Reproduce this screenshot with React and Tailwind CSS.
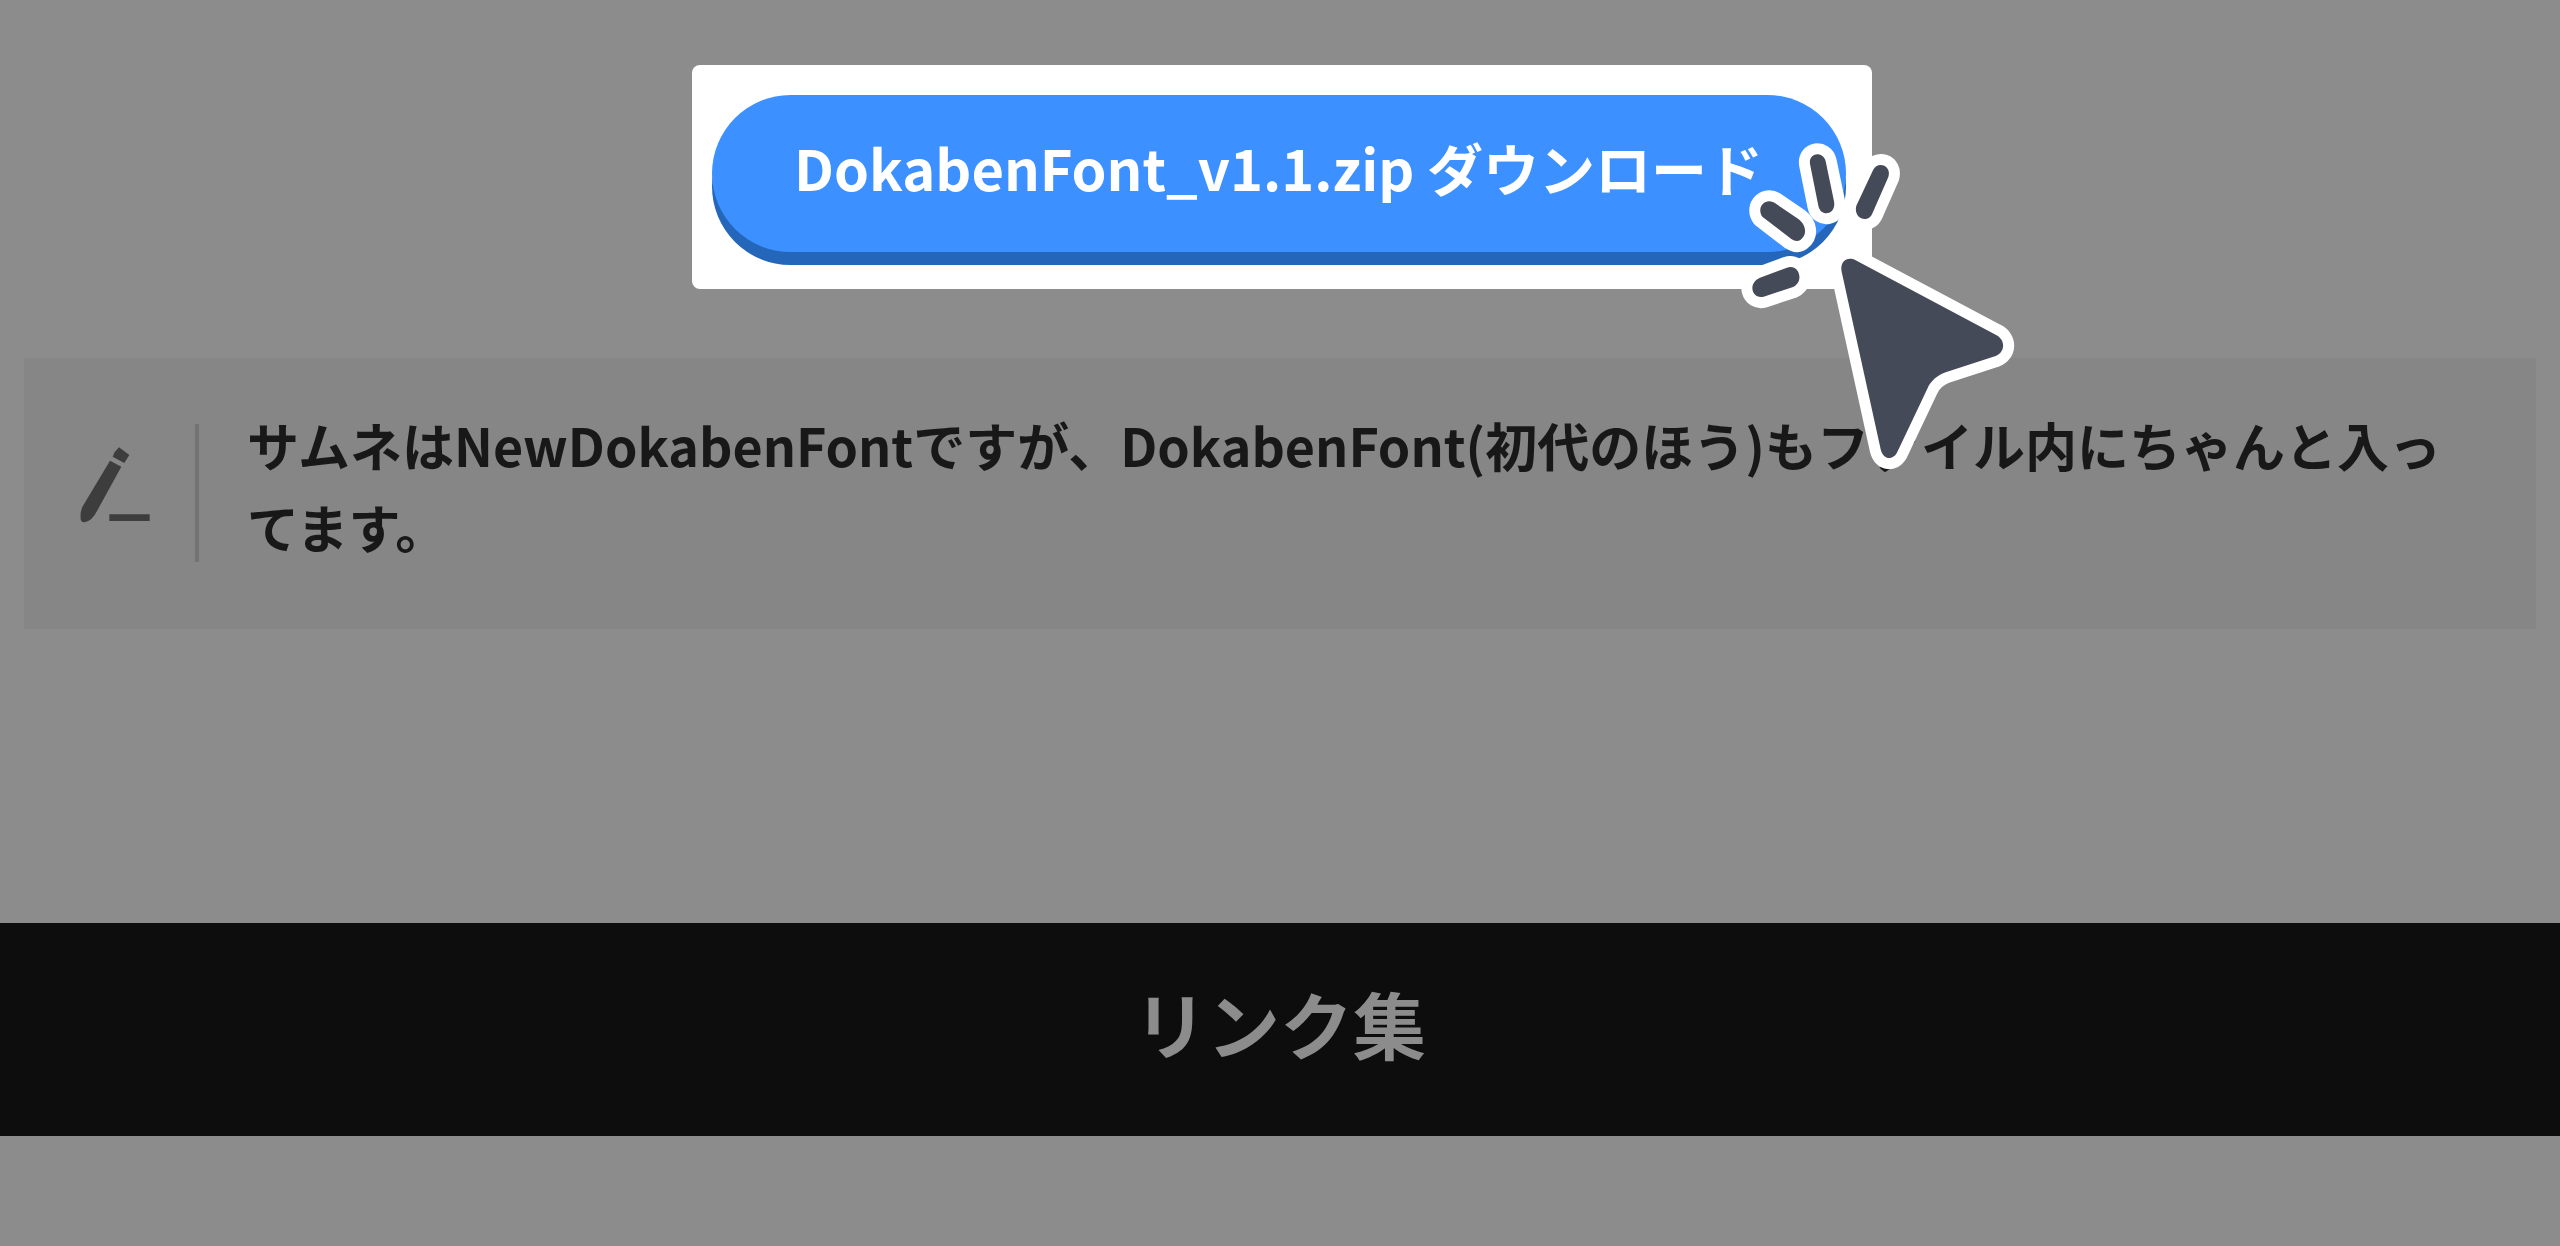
import React from 'react';

const PencilIcon = () => (
  <svg viewBox="240 324 210 228" className="w-[70px] h-[76px] shrink-0" fill="#3d3d3d" aria-hidden="true">
    <path d="M357 325 L388 348 L373 372 L338 353 Q343 337 357 325 Z" />
    <path d="M330 365 L364 383 L291 516 Q277 545 254 550 Q241 551 242 536 Q240 515 250 499 Z" />
    <path d="M328 526 H449 V546 H328 Z" />
  </svg>
);

const ARROW =
  'M482 455 C476 425 498 408 524 421 L944 644 C976 660 972 697 944 708 L794 757 C768 767 751 781 739 806 L650 994 C638 1023 606 1021 599 988 Z';

const RAYS =
  'M387 132 C382 98 426 92 434 124 L459 244 C467 284 419 293 412 257 Z ' +
  'M576 151 C588 122 633 134 622 171 L575 278 C562 313 516 297 526 257 Z ' +
  'M244 290 C224 261 256 228 286 252 L352 297 C375 314 380 343 359 359 Q347 368 331 357 Z ' +
  'M237 473 L318 443 C350 432 368 474 345 495 Q342 499 334 502 L248 530 C215 540 197 491 237 473 Z';

const ClickCursor = () => (
  <svg
    viewBox="0 0 1140 1110"
    className="absolute top-[55px] -right-[189px] w-[380px] h-[370px] pointer-events-none"
    aria-hidden="true"
  >
    <g fill="#fff" stroke="#fff" strokeWidth="66" strokeLinejoin="round">
      <path d={RAYS} />
      <path d={ARROW} />
    </g>
    <g fill="#454a59">
      <path d={RAYS} />
      <path d={ARROW} />
    </g>
  </svg>
);

const DownloadSection = () => (
  <div className="flex justify-center pl-[3px]">
    <section className="relative z-10 w-[1180px] max-w-full rounded-lg bg-white pt-[30px] pr-[26px] pb-[37px] pl-5">
      <button
        type="button"
        className="flex h-[157px] w-full items-center justify-center rounded-full bg-[#3c90ff] pb-3.5 text-[56px] leading-none font-bold whitespace-nowrap text-white shadow-[0_13px_0_#2466ba]"
      >
        DokabenFont_v1.1.zip ダウンロード
      </button>
      <ClickCursor />
    </section>
  </div>
);

const NoteBox = () => (
  <section className="mx-6 mt-[69px] flex items-start bg-[#868686] pt-[66px] pr-[60px] pb-[67px] pl-14">
    <div className="flex h-[138px] items-center border-r-4 border-[#737373] pr-[45px] pb-4">
      <PencilIcon />
    </div>
    <p className="-mt-5 -mb-6 ml-12 text-[52px] leading-[82px] font-bold text-[#181818]">
      サムネはNewDokabenFontですが、DokabenFont(初代のほう)もファイル内にちゃんと入ってます。
    </p>
  </section>
);

const App = () => {
  return (
    <main
      lang="ja"
      className="min-h-screen overflow-hidden bg-[#8c8c8c] pt-[65px] font-['Noto_Sans_CJK_JP',sans-serif]"
    >
      <DownloadSection />
      <NoteBox />
      <h2 className="mt-[294px] bg-[#0d0d0d] pt-[61px] pb-[76px] text-center text-[73px] leading-[76px] font-bold text-[#8c8c8c]">
        リンク集
      </h2>
    </main>
  );
};

export default App;
